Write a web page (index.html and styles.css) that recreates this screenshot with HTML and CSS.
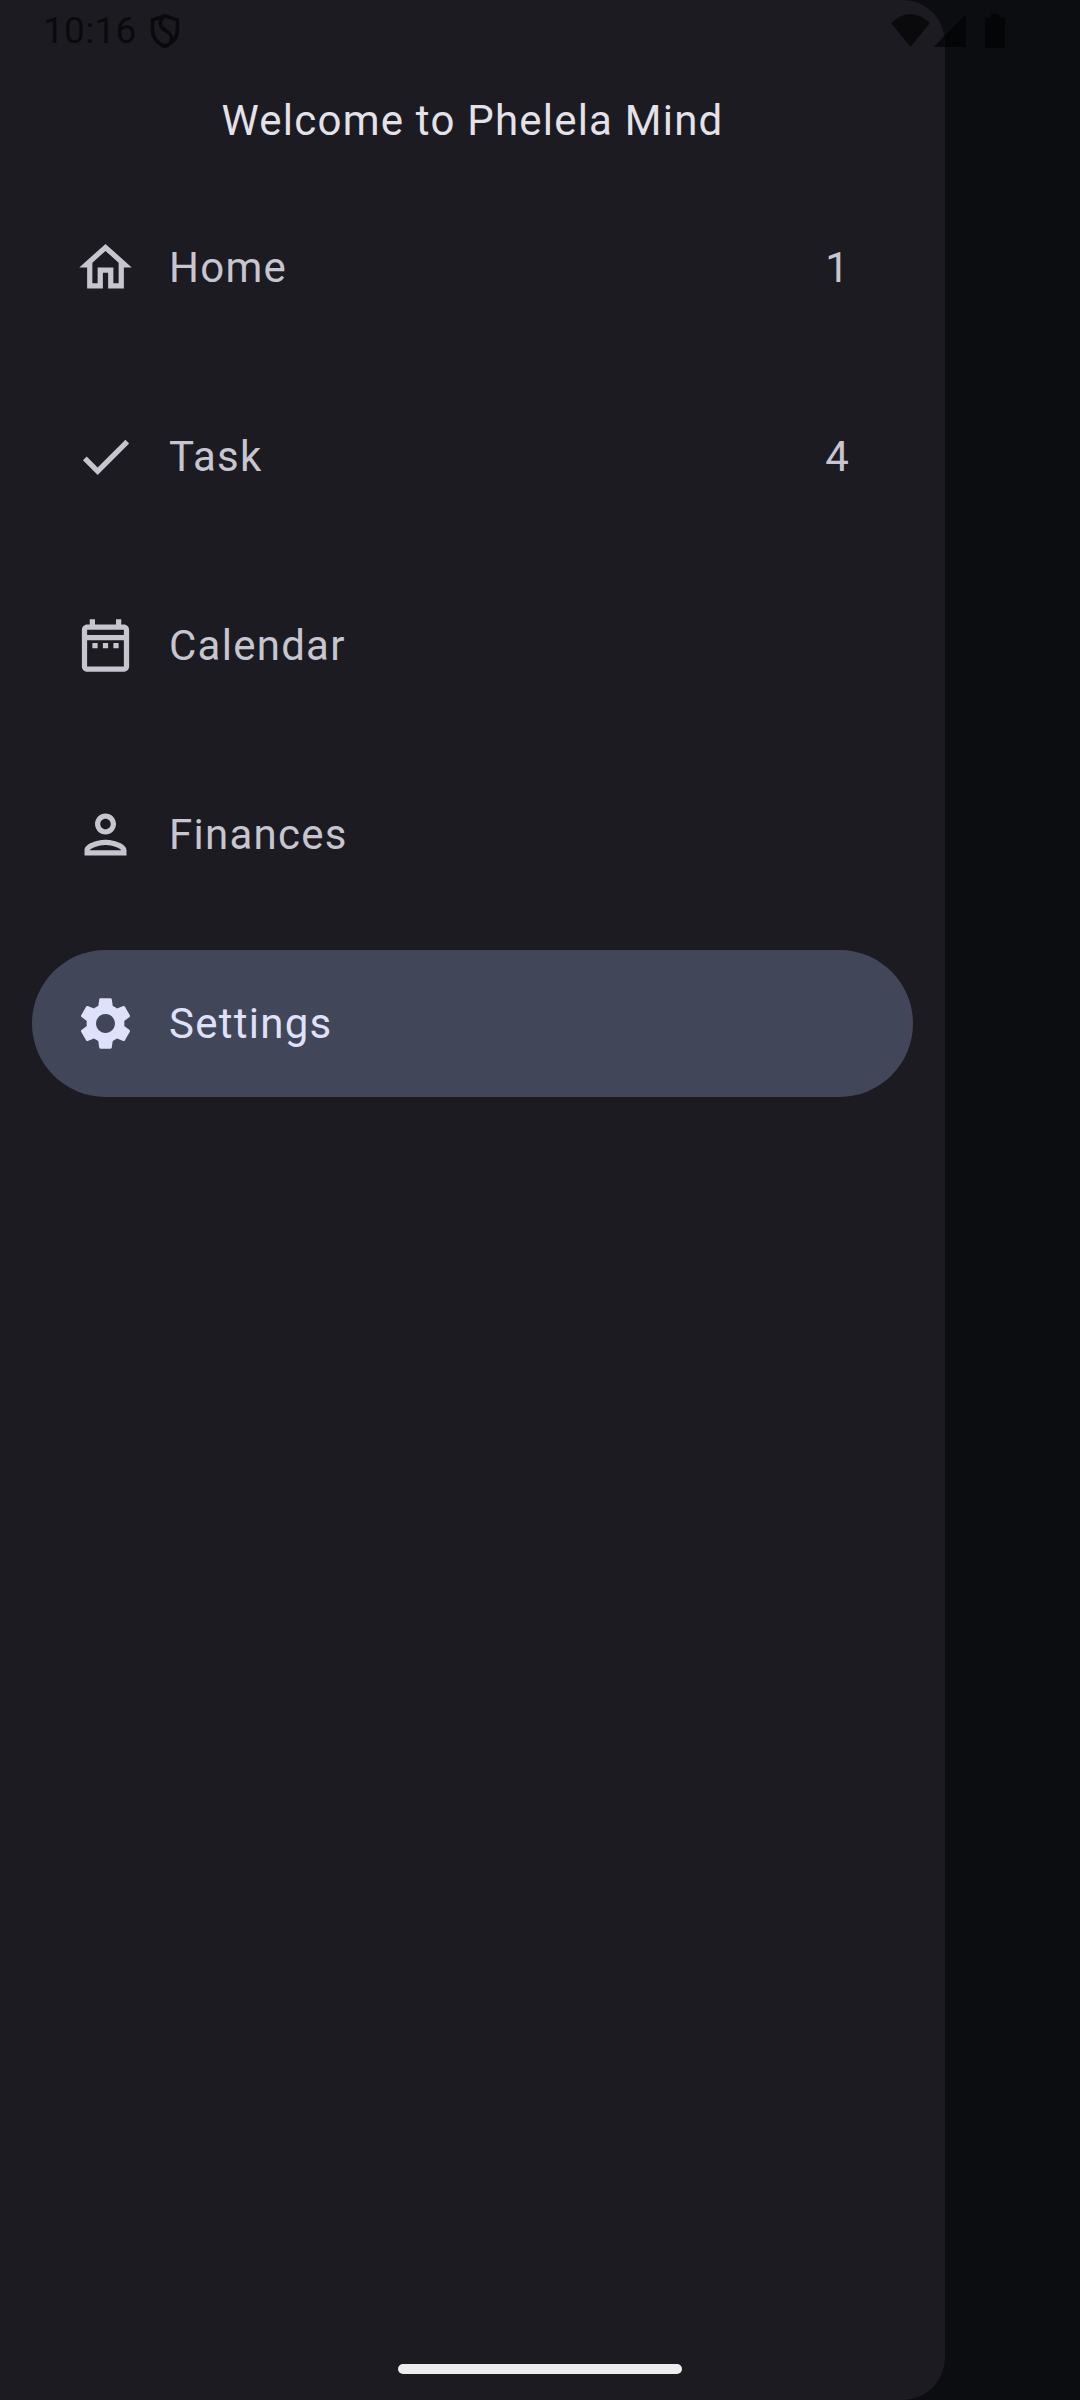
FILE: index.html
```html
<!DOCTYPE html>
<html lang="en">
<head>
<meta charset="utf-8">
<title>Phelela Mind</title>
<link rel="stylesheet" href="styles.css">
</head>
<body>
<div class="screen">
  <aside class="drawer">
    <h1 class="title">Welcome to Phelela Mind</h1>
    <nav class="menu">
      <a class="item">
        <svg class="icon" viewBox="0 0 24 24"><path d="M12 5.69l5 4.5V18h-2v-6H9v6H7v-7.81l5-4.5M12 3L2 12h3v8h6v-6h2v6h6v-8h3L12 3z"/></svg>
        <span class="label">Home</span><span class="badge">1</span>
      </a>
      <a class="item">
        <svg class="icon" viewBox="0 0 24 24"><path d="M9 16.17L4.83 12l-1.42 1.41L9 19 21 7l-1.41-1.41z"/></svg>
        <span class="label">Task</span><span class="badge">4</span>
      </a>
      <a class="item">
        <svg class="icon" viewBox="0 0 24 24"><path d="M7 11h2v2H7zm4 0h2v2h-2zm4 0h2v2h-2zM19 4h-1V2h-2v2H8V2H6v2H5c-1.1 0-2 .9-2 2v14c0 1.1.9 2 2 2h14c1.1 0 2-.9 2-2V6c0-1.1-.9-2-2-2zm0 16H5V10h14v10zm0-12H5V6h14v2z"/></svg>
        <span class="label">Calendar</span>
      </a>
      <a class="item">
        <svg class="icon" viewBox="0 0 24 24"><path d="M12 6c1.1 0 2 .9 2 2s-.9 2-2 2-2-.9-2-2 .9-2 2-2m0 10c2.7 0 5.8 1.29 6 2H6c.23-.72 3.31-2 6-2m0-12C9.790 4 8 5.790 8 8s1.790 4 4 4 4-1.790 4-4-1.790-4-4-4zm0 10c-2.670 0-8 1.340-8 4v2h16v-2c0-2.660-5.330-4-8-4z"/></svg>
        <span class="label">Finances</span>
      </a>
      <a class="item selected">
        <svg class="icon" viewBox="0 0 24 24"><path d="M19.140 12.940c.040-.300.060-.610.060-.940 0-.320-.020-.640-.070-.940l2.030-1.580c.180-.140.230-.410.120-.610l-1.920-3.320c-.120-.220-.370-.290-.590-.220l-2.390.960c-.500-.380-1.030-.700-1.620-.940l-.360-2.540c-.040-.240-.240-.410-.480-.410h-3.840c-.240 0-.430.170-.470.410l-.360 2.540c-.590.240-1.130.570-1.620.940l-2.390-.960c-.220-.080-.470 0-.590.220L2.740 8.870c-.120.210-.080.470.120.610l2.030 1.580c-.050.300-.090.630-.090.940s.020.640.070.940l-2.030 1.580c-.180.140-.230.410-.120.610l1.920 3.320c.120.220.370.290.590.220l2.390-.960c.500.380 1.030.700 1.620.940l.360 2.540c.050.240.240.410.480.410h3.840c.240 0 .440-.170.470-.410l.360-2.540c.590-.240 1.130-.560 1.620-.940l2.390.960c.220.080.470 0 .590-.220l1.920-3.320c.120-.220.070-.470-.120-.610l-2.010-1.580zM12 15.600c-1.980 0-3.600-1.620-3.600-3.600s1.620-3.600 3.600-3.600 3.600 1.620 3.600 3.600-1.620 3.600-3.600 3.600z"/></svg>
        <span class="label">Settings</span>
      </a>
    </nav>
  </aside>
  <div class="status">
    <span class="time">10:16</span>
    <svg class="shield" viewBox="0 0 32 38"><path d="M16 3.700L28.500 8v9.500c0 8-5.300 14-12.500 17C8.800 31.500 3.500 25.500 3.500 17.500V8zM14.500 5c-4.500 4-4 9 0 12l5.500 4c3.500 3 3 5.500 1.500 9.500"/></svg>
    <svg class="signals" viewBox="0 0 120 40"><path d="M1 12Q20.500-6 40 12L20.500 36zM43.500 36L76 3v33zM97 6.500h4V3h8v3.500h4q2 0 2 2V35q0 2-2 2H97q-2 0-2-2V8.500q0-2 2-2z"/></svg>
  </div>
  <div class="handle"></div>
</div>
</body>
</html>
```
FILE: styles.css
```css
* { box-sizing: border-box; }
body { margin: 0; background: #0b0d10; font-family: Roboto, sans-serif; }
.screen { position: relative; width: 1080px; height: 2400px; overflow: hidden; background: #0b0d10; }
.drawer {
  width: 945px; height: 2400px; padding: 89px 32px 0;
  background: #1b1b21; border-radius: 0 42px 42px 0;
}
.title {
  margin: 0 0 42px; font-size: 42px; font-weight: 400; line-height: 63px;
  letter-spacing: 1.22px; text-align: center; color: #e3e1e9;
}
.menu { display: flex; flex-direction: column; gap: 42px; }
.item {
  display: flex; align-items: center; height: 147px; padding: 0 63px 0 42px;
  border-radius: 74px; color: #c6c5d0; font-size: 42px; line-height: 63px; letter-spacing: 1.26px;
}
.selected { background: #424659; color: #dee1f9; }
.icon { width: 63px; height: 63px; margin-right: 32px; fill: currentColor; }
.label { flex: 1; }
.status {
  position: absolute; top: 0; left: 0; width: 1080px; height: 62px;
  padding: 0 70px 0 43px; display: flex; align-items: center; color: rgba(0, 0, 0, .6);
}
.time { font-size: 37px; line-height: 62px; letter-spacing: .3px; }
.shield { width: 32px; height: 38px; margin-left: 12px; fill: none; stroke: currentColor; stroke-width: 3.6; }
.signals { width: 120px; height: 40px; margin-left: auto; fill: currentColor; }
.handle {
  position: absolute; left: 398px; top: 2364px; width: 284px; height: 10px;
  border-radius: 5px; background: #ededed;
}
```
